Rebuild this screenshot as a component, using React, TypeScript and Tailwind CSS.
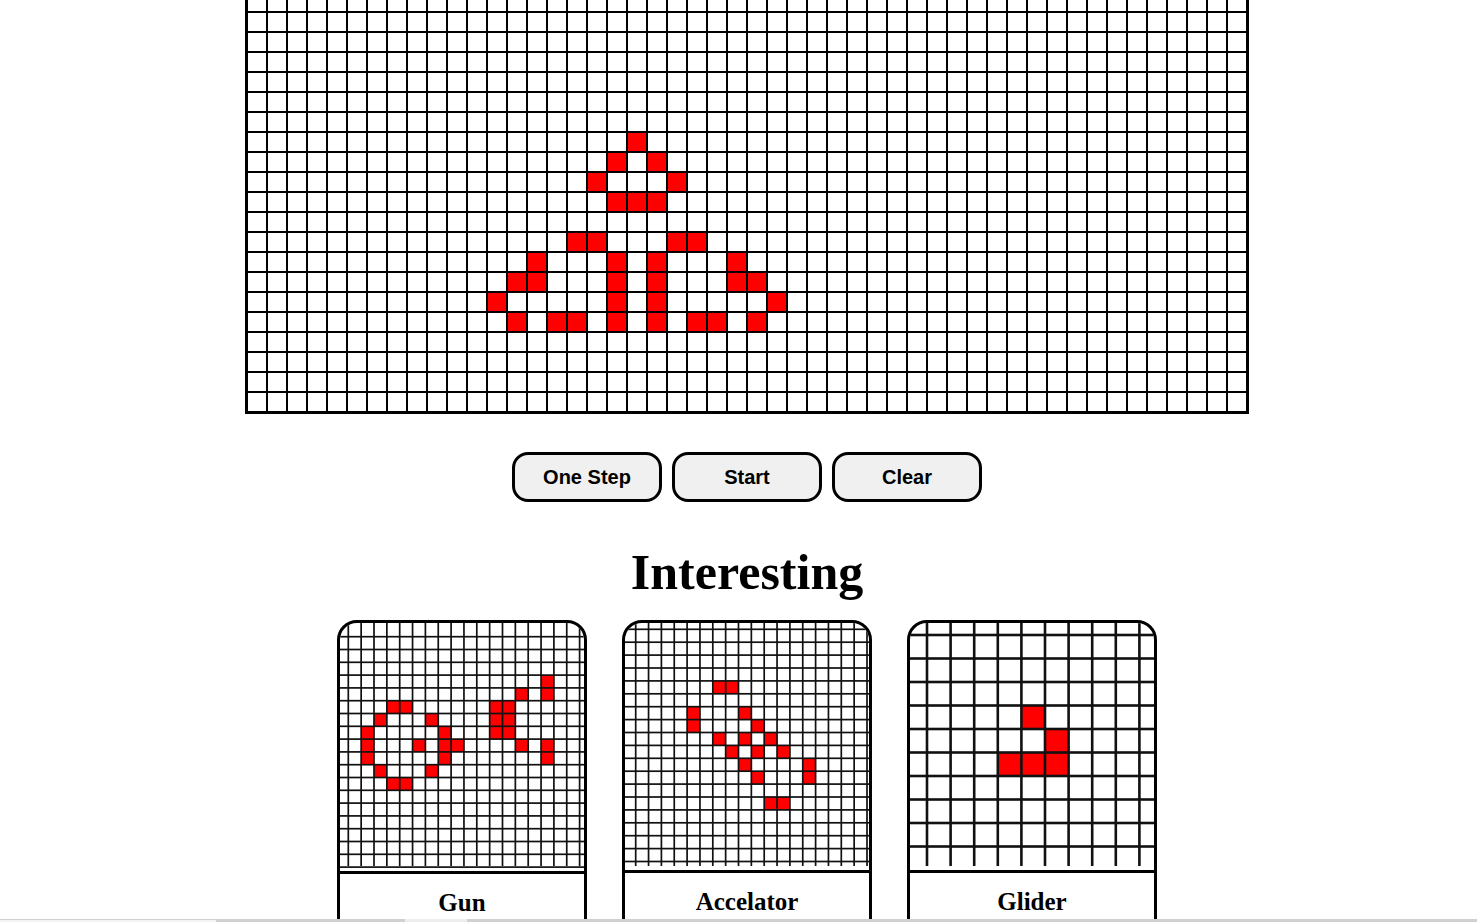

const range = (n: number) => Array.from({ length: n }, (_, i) => i);

const mainCells: [number, number][] = [
  [7, 0], [6, 1], [8, 1], [5, 2], [9, 2], [6, 3], [7, 3], [8, 3],
  [4, 5], [5, 5], [9, 5], [10, 5],
  [2, 6], [6, 6], [8, 6], [12, 6],
  [1, 7], [2, 7], [6, 7], [8, 7], [12, 7], [13, 7],
  [0, 8], [6, 8], [8, 8], [14, 8],
  [1, 9], [3, 9], [4, 9], [6, 9], [8, 9], [10, 9], [11, 9], [13, 9],
];

function MainBoard() {
  return (
    <svg width={998} height={411} shapeRendering="crispEdges" className="block">
      {mainCells.map(([c, r]) => (
        <rect key={`${c}-${r}`} x={240 + 20 * c} y={133 + 20 * r - 0} width={18} height={18} fill="#ff0000" />
      ))}
      {range(50).map((i) => (
        <rect key={`v${i}`} x={18 + 20 * i} y={0} width={2} height={411} fill="#000" />
      ))}
      {range(20).map((i) => (
        <rect key={`h${i}`} x={0} y={11 + 20 * i} width={998} height={2} fill="#000" />
      ))}
    </svg>
  );
}

type Thumb = {
  name: string;
  x0: number;
  y0: number;
  px: number;
  py: number;
  cols: number;
  rows: number;
  sw: number;
  imageHeight: string;
  captionPad: string;
  cells: [number, number][];
};

const thumbs: Thumb[] = [
  {
    name: "Gun",
    x0: 8.3,
    y0: 13.7,
    px: 12.85,
    py: 12.8,
    cols: 19,
    rows: 19,
    sw: 1.7,
    imageHeight: "h-[248px]",
    captionPad: "pt-[15px]",
    cells: [
      [15, 3], [15, 4], [13, 4],
      [3, 5], [4, 5], [11, 5], [12, 5],
      [2, 6], [6, 6], [11, 6], [12, 6],
      [1, 7], [7, 7], [11, 7], [12, 7],
      [1, 8], [5, 8], [7, 8], [8, 8], [13, 8], [15, 8],
      [1, 9], [7, 9], [15, 9],
      [2, 10], [6, 10],
      [3, 11], [4, 11],
    ],
  },
  {
    name: "Accelator",
    x0: 10.7,
    y0: 6.3,
    px: 12.85,
    py: 12.9,
    cols: 19,
    rows: 19,
    sw: 1.7,
    imageHeight: "h-[247px]",
    captionPad: "pt-[15px]",
    cells: [
      [6, 4], [7, 4],
      [4, 6], [8, 6],
      [4, 7], [9, 7],
      [6, 8], [8, 8], [10, 8],
      [7, 9], [9, 9], [11, 9],
      [8, 10], [13, 10],
      [9, 11], [13, 11],
      [10, 13], [11, 13],
    ],
  },
  {
    name: "Glider",
    x0: 17,
    y0: 12,
    px: 23.6,
    py: 23.5,
    cols: 10,
    rows: 10,
    sw: 2.6,
    imageHeight: "h-[247px]",
    captionPad: "pt-[15px]",
    cells: [[4, 3], [5, 4], [3, 5], [4, 5], [5, 5]],
  },
];

function ThumbBoard({ t }: { t: Thumb }) {
  const lineBottom = 243;
  return (
    <svg width={244} height={248} className="block">
      {t.cells.map(([c, r]) => (
        <rect
          key={`${c}-${r}`}
          x={t.x0 + t.px * c}
          y={t.y0 + t.py * r}
          width={t.px}
          height={t.py}
          fill="#ff0000"
        />
      ))}
      {range(t.cols).map((i) => (
        <rect
          key={`v${i}`}
          x={t.x0 + t.px * i - t.sw / 2}
          y={0}
          width={t.sw}
          height={lineBottom}
          fill="#111"
        />
      ))}
      {range(t.rows).map((i) => (
        <rect
          key={`h${i}`}
          x={0}
          y={t.y0 + t.py * i - t.sw / 2}
          width={244}
          height={t.sw}
          fill="#111"
        />
      ))}
    </svg>
  );
}

function Card({ t }: { t: Thumb }) {
  return (
    <div className="w-[250px] h-[320px] shrink-0 rounded-[20px] border-[3px] border-black overflow-hidden bg-white">
      <div className={`${t.imageHeight} overflow-hidden`}>
        <ThumbBoard t={t} />
      </div>
      <div className={`border-t-[3px] border-black ${t.captionPad} text-center text-[25px] leading-[28px] font-bold text-black`}>
        {t.name}
      </div>
    </div>
  );
}

export default function App() {
  return (
    <div
      className="relative h-[922px] w-[1477px] overflow-hidden bg-white text-black"
      style={{ fontFamily: '"Liberation Serif", serif' }}
    >
      <div className="ml-[245px] h-[414px] w-[1004px] border-x-[3px] border-b-[3px] border-black">
        <MainBoard />
      </div>

      <div className="ml-[512px] mt-[38px] flex gap-[10px]">
        {["One Step", "Start", "Clear"].map((label) => (
          <button
            key={label}
            className="h-[50px] w-[150px] rounded-[16px] border-[3px] border-black bg-[#f0f0f0] text-[20px] font-bold text-black"
            style={{ fontFamily: '"Liberation Sans", sans-serif' }}
          >
            {label}
          </button>
        ))}
      </div>

      <h1 className="mt-[43px] w-[1494px] text-center text-[50px] leading-[55px] font-bold">Interesting</h1>

      <div className="ml-[337px] mt-[20px] flex gap-[35px]">
        {thumbs.map((t) => (
          <Card key={t.name} t={t} />
        ))}
      </div>

      <div className="absolute bottom-0 left-0 flex h-[3px] w-full bg-[#d0d0d0]">
        <div className="h-full w-[216px] border-t border-[#d0d0d0] bg-[#f4f4f4]" />
        <div className="ml-[189px] h-full w-[62px] bg-[#eeeeee]" />
      </div>
    </div>
  );
}
